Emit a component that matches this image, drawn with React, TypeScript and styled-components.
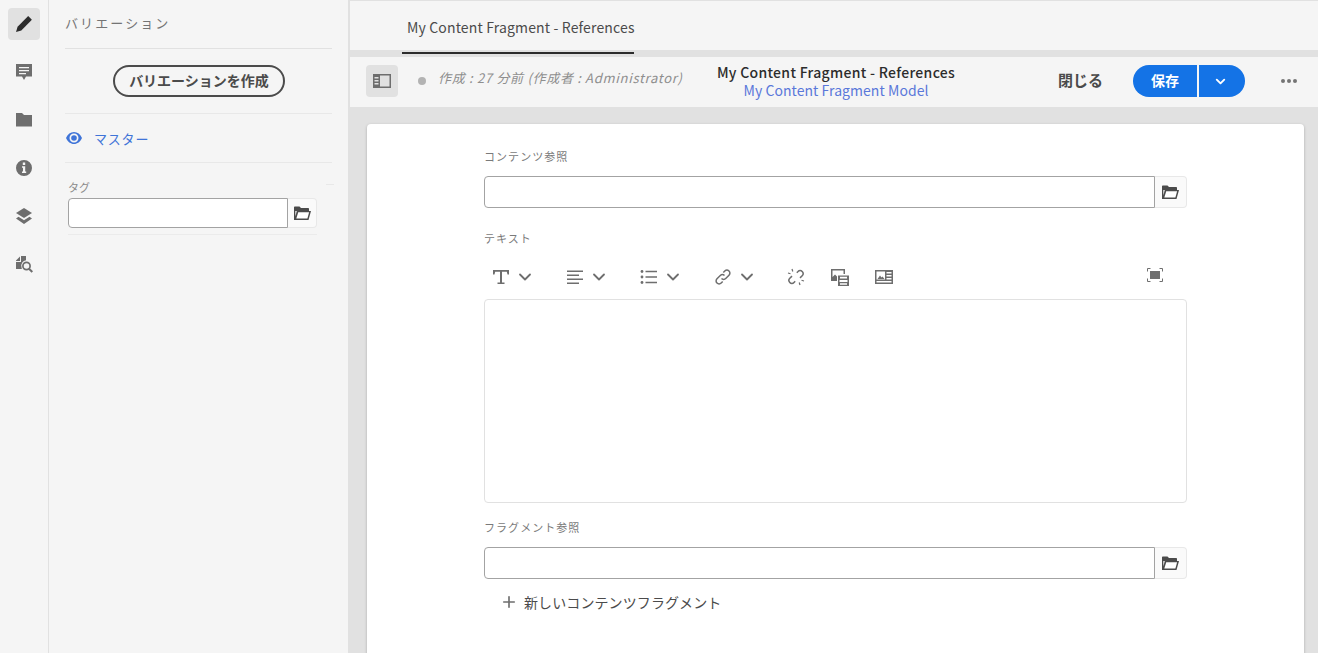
import React from 'react';
import styled, { createGlobalStyle } from 'styled-components';
import { ChevronDown, Plus } from 'lucide-react';

const GlobalStyle = createGlobalStyle`
  html, body {
    margin: 0;
    height: 100%;
    overflow: hidden;
    background: #f5f5f5;
    font-family: "Noto Sans CJK JP", sans-serif;
    color: #4b4b4b;
  }
  * { box-sizing: border-box; }
`;

const Root = styled.div`
  display: flex;
  width: 1318px;
  height: 653px;
  overflow: hidden;
`;

const Rail = styled.nav`
  width: 49px;
  flex: none;
  border-right: 1px solid #e1e1e1;
  padding: 8px 8px 0;
  display: flex;
  flex-direction: column;
  gap: 16px;
`;

const RailButton = styled.div<{ $active?: boolean }>`
  width: 32px;
  height: 32px;
  border-radius: 4px;
  display: flex;
  align-items: center;
  justify-content: center;
  color: ${p => (p.$active ? '#2c2c2c' : '#6e6e6e')};
  background: ${p => (p.$active ? '#e1e1e1' : 'transparent')};
`;

const Panel = styled.aside`
  width: 301px;
  flex: none;
  border-right: 2px solid #e1e1e1;
  padding: 0 16px;
  position: relative;
`;

const PanelTitle = styled.div`
  height: 49px;
  padding-top: 13px;
  font-size: 13px;
  line-height: 19px;
  letter-spacing: 2.1px;
  color: #747474;
  border-bottom: 1px solid #e1e1e1;
`;

const PanelAction = styled.div`
  height: 65px;
  display: flex;
  justify-content: center;
  padding-top: 16px;
  padding-left: 1px;
  border-bottom: 1px solid #e8e8e8;
`;

const OutlineButton = styled.button`
  width: 172px;
  height: 32px;
  border: 2px solid #4b4b4b;
  border-radius: 16px;
  background: transparent;
  font: 700 14px/24px "Noto Sans CJK JP", sans-serif;
  color: #4b4b4b;
  padding: 0 0 3px;
`;

const VariationRow = styled.div`
  height: 49px;
  display: flex;
  align-items: center;
  gap: 12px;
  padding-left: 1px;
  font-size: 13px;
  letter-spacing: 0.8px;
  color: #3f74d8;
  border-bottom: 1px solid #e8e8e8;
`;

const TagField = styled.div`
  padding: 13px 0 0 3px;
  width: 252px;
`;

const TagLabel = styled.div`
  font-size: 11px;
  line-height: 22px;
  color: #8a8a8a;
`;

const TagUnderline = styled.div`
  height: 1px;
  background: #ebebeb;
  margin-top: 6px;
`;

const Tick = styled.span`
  position: absolute;
  top: 184px;
  left: 277px;
  width: 8px;
  height: 1px;
  background: #e8e8e8;
`;

const InputGroup = styled.div<{ $height: number }>`
  display: flex;
  height: ${p => p.$height}px;
`;

const TextBox = styled.input`
  flex: 1;
  min-width: 0;
  height: 100%;
  border: 1px solid #a3a3a3;
  border-radius: 4px 0 0 4px;
  background: #fff;
  outline: none;
  padding: 0 8px;
`;

const FolderButton = styled.div<{ $width: number }>`
  width: ${p => p.$width}px;
  flex: none;
  display: flex;
  align-items: center;
  justify-content: center;
  background: #fafafa;
  border: 1px solid #e8e8e8;
  border-left: none;
  border-radius: 0 4px 4px 0;
  color: #4b4b4b;
`;

const Main = styled.main`
  flex: 1;
  min-width: 0;
  display: flex;
  flex-direction: column;
  background: #e1e1e1;
`;

const TabBar = styled.div`
  height: 50px;
  flex: none;
  background: #f5f5f5;
  border-top: 1px solid #e1e1e1;
  padding-left: 52px;
  display: flex;
`;

const Tab = styled.div`
  height: 53px;
  width: 232px;
  padding: 16px 0 0 5px;
  font-size: 14px;
  line-height: 20px;
  letter-spacing: 0.15px;
  color: #4b4b4b;
  border-bottom: 2px solid #2c2c2c;
  white-space: nowrap;
  position: relative;
  z-index: 1;
`;

const ActionBar = styled.div`
  height: 50px;
  flex: none;
  margin-top: 7px;
  background: #f5f5f5;
  display: flex;
  align-items: center;
  padding: 0 0 2px 16px;
  position: relative;
`;

const SideToggle = styled.div`
  width: 32px;
  height: 32px;
  border-radius: 4px;
  background: #e1e1e1;
  display: flex;
  align-items: center;
  justify-content: center;
  color: #6e6e6e;
`;

const StatusDot = styled.span`
  width: 8px;
  height: 8px;
  border-radius: 50%;
  background: #b3b3b3;
  margin: 0 12px 0 20px;
  flex: none;
`;

const Status = styled.span`
  font-size: 13px;
  font-style: italic;
  letter-spacing: 0.7px;
  color: #8e8e8e;
  white-space: nowrap;
  width: 278px;
  flex: none;
  margin-top: -7px;
`;

const TitleBlock = styled.div`
  width: 240px;
  flex: none;
  text-align: center;
  white-space: nowrap;
`;

const DocTitle = styled.div`
  font-size: 14px;
  line-height: 18px;
  font-weight: 500;
  letter-spacing: 0.3px;
  color: #2c2c2c;
`;

const ModelLink = styled.div`
  font-size: 14px;
  line-height: 18px;
  letter-spacing: 0.05px;
  color: #5a78da;
`;

const CloseLabel = styled.span`
  width: 45px;
  font-size: 15px;
  font-weight: 700;
  color: #4b4b4b;
  margin: -3px 0 0 102px;
  white-space: nowrap;
`;

const SaveGroup = styled.div`
  display: flex;
  gap: 2px;
  margin-left: 30px;
`;

const SaveButton = styled.div`
  width: 64px;
  height: 32px;
  background: #1473e6;
  border-radius: 16px 0 0 16px;
  color: #fff;
  font-size: 14px;
  font-weight: 700;
  display: flex;
  align-items: center;
  justify-content: center;
  padding-bottom: 3px;
`;

const SaveMenu = styled.div`
  width: 46px;
  height: 32px;
  background: #1473e6;
  border-radius: 0 16px 16px 0;
  color: #fff;
  display: flex;
  align-items: center;
  justify-content: center;
  padding-right: 4px;
`;

const MoreButton = styled.div`
  margin-left: 36px;
  display: flex;
  gap: 2px;
`;

const MoreDot = styled.span`
  width: 4px;
  height: 4px;
  border-radius: 50%;
  background: #747474;
`;

const ContentArea = styled.div`
  flex: 1;
  min-height: 0;
  padding: 17px 14px 0 17px;
`;

const Card = styled.section`
  background: #fff;
  height: 100%;
  min-height: 560px;
  border-radius: 4px;
  box-shadow: 0 1px 3px rgba(0, 0, 0, 0.25);
  padding: 0 117px;
`;

const FieldLabel = styled.div<{ $top: number; $height: number }>`
  padding-top: ${p => p.$top}px;
  height: ${p => p.$height}px;
  font-size: 11px;
  line-height: 16px;
  letter-spacing: 1.05px;
  color: #7a7a7a;
`;

const EditorBar = styled.div`
  height: 42px;
  display: flex;
  align-items: center;
  padding-bottom: 2px;
  position: relative;
  color: #6e6e6e;
`;

const ToolGroup = styled.div<{ $width: number }>`
  width: ${p => p.$width}px;
  flex: none;
  display: flex;
  align-items: center;
  gap: 5px;
  padding-left: 8px;
`;

const FullscreenButton = styled.div`
  position: absolute;
  top: 11px;
  right: 24px;
  line-height: 0;
`;

const EditorArea = styled.div`
  height: 204px;
  border: 1px solid #e1e1e1;
  border-radius: 4px;
`;

const AddRow = styled.div`
  display: flex;
  align-items: center;
  gap: 6px;
  height: 32px;
  margin-top: 8px;
  padding: 0 0 2px 16px;
  font-size: 14px;
  letter-spacing: 0.1px;
  color: #4b4b4b;
`;

function FolderIcon() {
  return (
    <svg width="17" height="15" viewBox="0 0 17 15">
      <path fill="currentColor" d="M0 1.500C0 .9.400.5 1 .5h4.500L7 2h7c.6 0 1 .4 1 1v2h2l-2.500 9H0z" />
      <path fill="#fff" d="M4.200 6.300h10.900l-1.700 6.300H2.300z" />
      <path fill="#fafafa" d="M1.300 5h1.500L1.300 10.500z" />
    </svg>
  );
}

function Caret() {
  return <ChevronDown size={20} strokeWidth={2.2} />;
}

export default function App() {
  return (
    <Root>
      <GlobalStyle />
      <Rail>
        <RailButton $active>
          <svg width="18" height="18" viewBox="0 0 18 18">
            <path fill="currentColor" d="M13.200 1.100 16.900 4.800 6.300 15.400 1 17 2.600 11.700z" />
          </svg>
        </RailButton>
        <RailButton>
          <svg width="18" height="18" viewBox="0 0 18 18">
            <path
              fill="currentColor"
              fillRule="evenodd"
              d="M1 1h16v12.500h-6L9 17l-2-3.500H1zM4 4v1.300h10V4zm0 3v1.300h10V7zm0 3v1.300h7V10z"
            />
          </svg>
        </RailButton>
        <RailButton>
          <svg width="18" height="18" viewBox="0 0 18 18">
            <path fill="currentColor" d="M1 2h6l2 2h8v11.500H1z" />
          </svg>
        </RailButton>
        <RailButton>
          <svg width="18" height="18" viewBox="0 0 18 18">
            <path
              fill="currentColor"
              fillRule="evenodd"
              d="M9 1a8 8 0 1 0 0 16A8 8 0 0 0 9 1zM7.800 3.500h2.400v2.400H7.800zM7 7.300h3.200v5.200h1v1.500H7v-1.500h1V8.800H7z"
            />
          </svg>
        </RailButton>
        <RailButton>
          <svg width="18" height="18" viewBox="0 0 18 18">
            <path fill="currentColor" d="M9 1l8 5-8 5-8-5z" />
            <path fill="currentColor" d="M3.500 9.800 9 13.200l5.500-3.400L17 11.500 9 17l-8-5.500z" />
          </svg>
        </RailButton>
        <RailButton>
          <svg width="18" height="18" viewBox="0 0 18 18">
            <path fill="currentColor" d="M1 5.500 5 1.500V6H1zM6 1h5v4.200A5.500 5.500 0 0 0 6.500 12c0 .7.200 1.400.4 2H1V7h5z" />
            <circle cx="11.500" cy="11" r="3.600" fill="none" stroke="currentColor" strokeWidth="1.700" />
            <path stroke="currentColor" strokeWidth="2" d="M14 13.700l3.300 3.300" />
          </svg>
        </RailButton>
      </Rail>

      <Panel>
        <Tick />
        <PanelTitle>バリエーション</PanelTitle>
        <PanelAction>
          <OutlineButton>バリエーションを作成</OutlineButton>
        </PanelAction>
        <VariationRow>
          <svg width="16" height="12" viewBox="0 0 16 12">
            <path
              fill="currentColor"
              fillRule="evenodd"
              d="M8 0C4.500 0 1.600 2.300 0 6c1.600 3.700 4.500 6 8 6s6.400-2.300 8-6c-1.600-3.700-4.500-6-8-6zm0 1.500a4.500 4.500 0 1 1 0 9 4.500 4.500 0 0 1 0-9z"
            />
            <circle cx="8" cy="6" r="2.800" fill="currentColor" />
          </svg>
          マスター
        </VariationRow>
        <TagField>
          <TagLabel>タグ</TagLabel>
          <InputGroup $height={30}>
            <TextBox aria-label="タグ" />
            <FolderButton $width={29}>
              <FolderIcon />
            </FolderButton>
          </InputGroup>
          <TagUnderline />
        </TagField>
      </Panel>

      <Main>
        <TabBar>
          <Tab>My Content Fragment - References</Tab>
        </TabBar>
        <ActionBar>
          <SideToggle>
            <svg width="18" height="16" viewBox="0 0 18 16">
              <path
                fill="currentColor"
                fillRule="evenodd"
                d="M0 1h18v14H0zm7 1.500V13.500h9.500V2.500zM1.500 4v1.500h4V4zm0 3v1.500h4V7zm0 3v1.500h4V10z"
              />
            </svg>
          </SideToggle>
          <StatusDot />
          <Status>作成 : 27 分前 (作成者 : Administrator)</Status>
          <TitleBlock>
            <DocTitle>My Content Fragment - References</DocTitle>
            <ModelLink>My Content Fragment Model</ModelLink>
          </TitleBlock>
          <CloseLabel>閉じる</CloseLabel>
          <SaveGroup>
            <SaveButton>保存</SaveButton>
            <SaveMenu>
              <ChevronDown size={15} strokeWidth={3} />
            </SaveMenu>
          </SaveGroup>
          <MoreButton>
            <MoreDot />
            <MoreDot />
            <MoreDot />
          </MoreButton>
        </ActionBar>
        <ContentArea>
          <Card>
            <FieldLabel $top={24} $height={52}>コンテンツ参照</FieldLabel>
            <InputGroup $height={32}>
              <TextBox aria-label="コンテンツ参照" />
              <FolderButton $width={32}>
                <FolderIcon />
              </FolderButton>
            </InputGroup>
            <FieldLabel $top={22} $height={49}>テキスト</FieldLabel>
            <EditorBar>
              <ToolGroup $width={74}>
                <svg width="18" height="16" viewBox="0 0 18 16">
                  <path fill="currentColor" d="M1 1h16v4.500h-1.500L14.800 2.800H10V13.500h2.500V15h-7v-1.500H8V2.800H3.200L2.500 5.500H1z" />
                </svg>
                <Caret />
              </ToolGroup>
              <ToolGroup $width={74}>
                <svg width="18" height="16" viewBox="0 0 18 16">
                  <path fill="currentColor" d="M1 1.500h16V3H1zM1 5.500h12V7H1zM1 9.500h16V11H1zM1 13.500h12V15H1z" />
                </svg>
                <Caret />
              </ToolGroup>
              <ToolGroup $width={74}>
                <svg width="18" height="16" viewBox="0 0 18 16">
                  <circle cx="2" cy="2.500" r="1.400" fill="currentColor" />
                  <circle cx="2" cy="8" r="1.400" fill="currentColor" />
                  <circle cx="2" cy="13.500" r="1.400" fill="currentColor" />
                  <path fill="currentColor" d="M5.500 1.700H17v1.600H5.500zM5.500 7.200H17v1.600H5.500zM5.500 12.700H17v1.600H5.500z" />
                </svg>
                <Caret />
              </ToolGroup>
              <ToolGroup $width={73}>
                <svg width="18" height="18" viewBox="0 0 18 18" fill="none" stroke="currentColor" strokeWidth="1.500">
                  <path d="M7.500 10.500c1.300 1.300 3 1.200 4.200 0l3.300-3.300c1.200-1.200 1.200-3 0-4.200s-3-1.200-4.200 0L9.300 4.500" />
                  <path d="M10.500 7.500c-1.300-1.300-3-1.200-4.200 0L3 10.800c-1.200 1.200-1.200 3 0 4.200s3 1.200 4.200 0l1.500-1.500" />
                </svg>
                <Caret />
              </ToolGroup>
              <ToolGroup $width={43}>
                <svg width="18" height="18" viewBox="0 0 18 18" fill="none" stroke="currentColor" strokeWidth="1.500">
                  <path d="M9.800 4.700 11 3.500c1.200-1.300 3-1.300 4.200 0s1.200 3 0 4.200L13 9.900" />
                  <path d="M8.200 13.300 7 14.500c-1.200 1.300-3 1.300-4.200 0s-1.200-3 0-4.200L5 8.100" />
                  <path d="M5 1l.8 2.500M1 5l2.500.8M13 17l-.8-2.500M17 13l-2.500-.8" strokeWidth="1.200" />
                </svg>
              </ToolGroup>
              <ToolGroup $width={45}>
                <svg width="20" height="18" viewBox="0 0 20 18">
                  <path fill="currentColor" d="M1 1h14v5h-1.500V2.500h-11V9L5 6.500 7 8.500V13H1z" />
                  <path
                    fill="currentColor"
                    fillRule="evenodd"
                    d="M8 7.500h11V18H8zm2 1.300v1.800h7V8.800zm0 6.500v1.500h7v-1.500zM9.500 12v2h8v-2z"
                  />
                </svg>
              </ToolGroup>
              <ToolGroup $width={40}>
                <svg width="18" height="16" viewBox="0 0 18 16">
                  <path
                    fill="currentColor"
                    fillRule="evenodd"
                    d="M0 1h18v14H0zm1.500 1.500v8h8.500v-8zM11.500 3v1.500h5V3zm0 3v1.500h5V6zm0 3v1.500h5V9zM1.500 12v1.500h15V12z"
                  />
                  <path fill="currentColor" d="M2.500 10 5 6.500l1.500 2L7.500 7.500 9.500 10z" />
                </svg>
              </ToolGroup>
              <FullscreenButton>
                <svg width="16" height="14" viewBox="0 0 16 14">
                  <path fill="none" stroke="#6e6e6e" strokeWidth="1" d="M.5 3.500v-3h3M12.500.5h3v3M15.500 10.500v3h-3M3.500 13.500h-3v-3" />
                  <rect x="3" y="3" width="10" height="8" fill="#6e6e6e" />
                </svg>
              </FullscreenButton>
            </EditorBar>
            <EditorArea />
            <FieldLabel $top={16} $height={44}>フラグメント参照</FieldLabel>
            <InputGroup $height={32}>
              <TextBox aria-label="フラグメント参照" />
              <FolderButton $width={32}>
                <FolderIcon />
              </FolderButton>
            </InputGroup>
            <AddRow>
              <Plus size={18} strokeWidth={2.2} color="#6e6e6e" />
              新しいコンテンツフラグメント
            </AddRow>
          </Card>
        </ContentArea>
      </Main>
    </Root>
  );
}
